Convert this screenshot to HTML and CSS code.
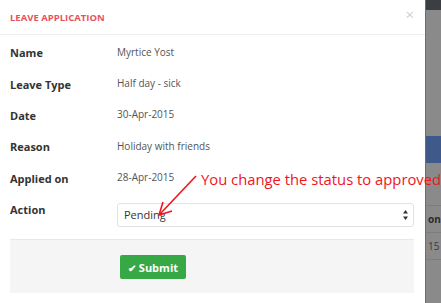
FILE: index.html
```html
<!DOCTYPE html>
<html lang="en">
<head>
  <meta charset="UTF-8" />
  <title>Leave Application</title>
  <link rel="stylesheet" href="styles.css">
</head>
<body>
  <div class="modal">
    <div class="modal-header">
      <h4>Leave Application</h4>
      <span class="close">&times;</span>
    </div>

    <div class="modal-body">
      <div class="row"><span class="label">Name</span><span class="value">Myrtice Yost</span></div>
      <div class="row"><span class="label">Leave Type</span><span class="value">Half day - sick</span></div>
      <div class="row"><span class="label">Date</span><span class="value">30-Apr-2015</span></div>
      <div class="row"><span class="label">Reason</span><span class="value">Holiday with friends</span></div>
      <div class="row"><span class="label">Applied on</span><span class="value">28-Apr-2015</span></div>
      <div class="row action-row">
        <span class="label">Action</span>
        <div class="select">
          <span>Pending</span>
          <svg width="5" height="10" viewBox="0 0 5 10"><path d="M2.5 0L5 3.6H0z M2.5 10L5 6.4H0z" fill="#333"/></svg>
        </div>
      </div>

      <div class="modal-footer">
        <button type="button"><span class="tick">&#10004;</span> Submit</button>
      </div>
    </div>
  </div>

  <!-- page behind the modal -->
  <div class="backdrop">
    <div class="topbar"></div>
    <div class="band"></div>
    <div class="cell head">on</div>
    <div class="cell">15</div>
  </div>

  <!-- annotation drawn on top of the screenshot -->
  <div class="note">
    <svg class="arrow" width="44" height="44" viewBox="0 0 44 44">
      <path d="M40 2L4 40" stroke="#f0141e" stroke-width="1.6" fill="none"/>
      <path d="M7 28L3 41L16 37" stroke="#f0141e" stroke-width="1.6" fill="none"/>
    </svg>
    <span class="note-text">You change the status to approved</span>
  </div>
</body>
</html>
```

FILE: styles.css
```css
/* Global */
body {
  margin: 0;
  width: 441px;
  height: 303px;
  overflow: hidden;
  display: flex;
  font-family: 'Open Sans', 'Liberation Sans', sans-serif;
  background: #8a8a8a;
  color: #333;
}
.modal {
  width: 425px;
  flex: none;
  background: #fff;
  border-right: 1px solid #6e6e6e;
}
/* Header */
.modal-header {
  height: 34px;
  border-bottom: 1px solid #eee;
  display: flex;
  align-items: center;
  justify-content: space-between;
  padding: 0 10px;
}
.modal-header h4 {
  margin: 0;
  font-size: 9.5px;
  font-weight: 700;
  text-transform: uppercase;
  color: #e8525c;
}
.close {
  font-size: 15px;
  color: #cfcfcf;
  margin-top: -6px;
  margin-right: 1px;
}
/* Body rows */
.modal-body {
  padding: 2px 11px 0 10px;
}
.row {
  display: flex;
  align-items: center;
  height: 31.4px;
}
.label {
  width: 107px;
  font-size: 11px;
  font-weight: 700;
  color: #333;
}
.value {
  font-size: 10px;
  color: #555;
  margin-top: -2px;
}
.action-row {
  height: 31px;
  align-items: flex-start;
  padding-top: 8px;
}
.select {
  flex: 1;
  height: 22px;
  margin-top: 1px;
  border: 1px solid #e2e2e2;
  border-radius: 3px;
  display: flex;
  align-items: center;
  justify-content: space-between;
  padding: 0 5px 0 6px;
  font-size: 11px;
  color: #333;
}
/* Footer */
.modal-footer {
  margin-top: 6px;
  height: 38px;
  padding: 15px 0 0 110px;
  background: #f5f5f5;
  border-top: 1px solid #e8e8e8;
}
button {
  width: 66px;
  height: 24px;
  border: none;
  border-radius: 2px;
  background: #36a946;
  color: #fff;
  font-family: 'Open Sans', 'Liberation Sans', sans-serif;
  font-size: 11px;
  font-weight: 700;
  padding: 0;
}
.tick {
  font-size: 10px;
}
/* Page behind the modal */
.backdrop {
  flex: 1;
  display: flex;
  flex-direction: column;
  overflow: hidden;
}
.topbar {
  height: 10px;
  background: #3b3e42;
}
.band {
  height: 27px;
  margin-top: 126px;
  background: #3f5a8a;
}
.cell {
  height: 26px;
  border-bottom: 1px solid #7d7d7d;
  font-size: 10px;
  line-height: 26px;
  color: #2c2c2c;
  padding-left: 2px;
  font-weight: 700;
}
.cell.head {
  margin-top: 42px;
  border-top: 1px solid #7d7d7d;
}
.cell + .cell {
  font-weight: 400;
  color: #3a3a3a;
}
/* Annotation */
.note {
  position: absolute;
  left: 156px;
  top: 168px;
  display: flex;
  align-items: flex-start;
  white-space: nowrap;
}
.arrow {
  margin-top: 6px;
}
.note-text {
  font-size: 14.8px;
  color: #f0141e;
  margin-left: 1px;
  margin-top: 1px;
}
```
